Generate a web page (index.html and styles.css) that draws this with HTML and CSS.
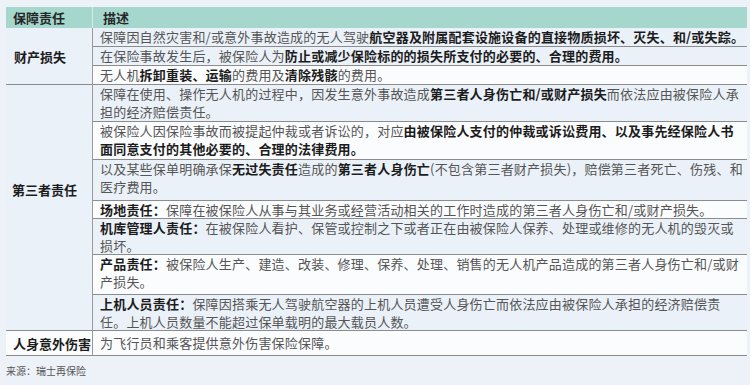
FILE: index.html
```html
<!DOCTYPE html>
<html lang="zh-CN">
<head>
<meta charset="utf-8">
<title>保障责任</title>
<link rel="stylesheet" href="styles.css">
</head>
<body>
<div class="page">
  <div class="cover">
    <div class="hd hd-1">保障责任</div>
    <div class="hd hd-2">描述</div>

    <div class="cat cat-prop">财产损失</div>
    <div class="desc blue">保障因自然灾害和/或意外事故造成的无人驾驶<b>航空器及附属配套设施设备的直接物质损坏、灭失、和/或失踪。</b></div>
    <div class="desc blue">在保险事故发生后，被保险人为<b>防止或减少保险标的的损失所支付的必要的、合理的费用。</b></div>
    <div class="desc white">无人机<b>拆卸重装、运输</b>的费用及<b>清除残骸</b>的费用。</div>

    <div class="cat cat-third">第三者责任</div>
    <div class="desc blue">保障在使用、操作无人机的过程中，因发生意外事故造成<b>第三者人身伤亡和/或财产损失</b>而依法应由被保险人承<br>担的经济赔偿责任。</div>
    <div class="desc white">被保险人因保险事故而被提起仲裁或者诉讼的，对应<b>由被保险人支付的仲裁或诉讼费用、以及事先经保险人书<br>面同意支付的其他必要的、合理的法律费用。</b></div>
    <div class="desc blue">以及某些保单明确承保<b>无过失责任</b>造成的<b>第三者人身伤亡</b>(不包含第三者财产损失)，赔偿第三者死亡、伤残、和<br>医疗费用。</div>
    <div class="desc white"><b>场地责任：</b>保障在被保险人从事与其业务或经营活动相关的工作时造成的第三者人身伤亡和/或财产损失。</div>
    <div class="desc blue"><b>机库管理人责任：</b>在被保险人看护、保管或控制之下或者正在由被保险人保养、处理或维修的无人机的毁灭或<br>损坏。</div>
    <div class="desc white"><b>产品责任：</b>被保险人生产、建造、改装、修理、保养、处理、销售的无人机产品造成的第三者人身伤亡和/或财<br>产损失。</div>
    <div class="desc blue"><b>上机人员责任：</b>保障因搭乘无人驾驶航空器的上机人员遭受人身伤亡而依法应由被保险人承担的经济赔偿责<br>任。上机人员数量不能超过保单载明的最大载员人数。</div>

    <div class="cat cat-acc">人身意外伤害</div>
    <div class="desc white desc-mid">为飞行员和乘客提供意外伤害保险保障。</div>
  </div>
  <p class="source">来源：瑞士再保险</p>
</div>
</body>
</html>
```

FILE: styles.css
```css
html, body {
  margin: 0;
  padding: 0;
  background: #edf2f9;
}

body {
  font-family: "Noto Sans CJK SC", "Noto Sans", sans-serif;
  font-size: 13px;
  color: #555;
}

.page {
  padding: 7px 3px 0 6px;
}

.cover {
  display: grid;
  grid-template-columns: 87px 654px;
  grid-template-rows: 21px 19px 19px 19px 37px 38px 41px 18px 36px 40px 36px 25px;
}

.hd {
  background: #a5d7cd;
  color: #262626;
  font-weight: 700;
  display: flex;
  align-items: center;
  line-height: 18px;
}

.hd-1 {
  padding-left: 7px;
  border-right: 1px solid #d6ebe7;
}

.hd-2 {
  padding-left: 10px;
}

.cat {
  box-sizing: border-box;
  border-right: 1px solid #9a9a9a;
  border-bottom: 1px solid #8c8c8c;
  font-weight: 700;
  color: #1c1c1c;
  display: flex;
  align-items: center;
  padding-left: 8px;
  background: #ebf1f8;
}

.cat-prop {
  grid-row: 2 / 5;
}

.cat-third {
  grid-row: 5 / 12;
  padding-left: 6px;
  padding-bottom: 36px;
}

.cat-acc {
  grid-row: 12 / 13;
  padding-left: 7px;
  background: #fbfcfe;
}

.desc {
  box-sizing: border-box;
  border-bottom: 1px solid #8c8c8c;
  padding: 0 0 0 7px;
  line-height: 18px;
  letter-spacing: 0.2px;
  white-space: nowrap;
  overflow: hidden;
}

.desc b {
  color: #1c1c1c;
  font-weight: 700;
}

.blue {
  background: #ebf1f8;
}

.white {
  background: #fbfcfe;
}

.desc-mid {
  display: flex;
  align-items: center;
}

.source {
  margin: 8px 0 0 0;
  font-size: 10px;
  line-height: 14px;
  color: #555;
}
```
